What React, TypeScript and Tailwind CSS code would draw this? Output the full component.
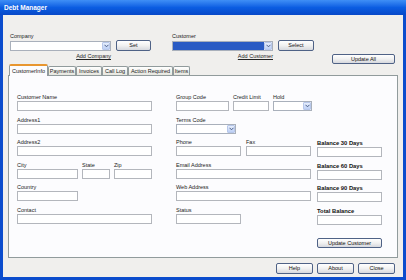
import type { ReactNode } from 'react';

function Label({ children, bold }: { children: ReactNode; bold?: boolean }) {
  return (
    <div
      className={
        bold
          ? 'h-[8px] leading-[8px] text-[5.8px] font-bold text-[#111] whitespace-nowrap'
          : 'h-[8px] leading-[8px] text-[5.5px] text-[#222] whitespace-nowrap'
      }
    >
      {children}
    </div>
  );
}

function Input({ className = 'w-full' }: { className?: string }) {
  return <div className={`h-[10px] border border-[#b3b6bc] bg-white ${className}`} />;
}

function Chevron() {
  return (
    <svg width="5" height="4" viewBox="0 0 5 4">
      <path d="M0.5 0.8 L2.5 2.8 L4.5 0.8" fill="none" stroke="#4b5d86" strokeWidth="1" />
    </svg>
  );
}

function Combo({ className, selected }: { className: string; selected?: boolean }) {
  return (
    <div className={`flex h-[10px] border border-[#a9b0bb] bg-white ${className}`}>
      <div className={selected ? 'flex-1 bg-[#2a5bc4]' : 'flex-1'} />
      <div className="flex w-[8px] items-center justify-center rounded-[1px] border border-[#b7c7ea] bg-linear-to-b from-[#e6eefc] to-[#bccff5]">
        <Chevron />
      </div>
    </div>
  );
}

function Button({ children, className }: { children: ReactNode; className: string }) {
  return (
    <div
      className={`flex items-center justify-center rounded-[2px] border border-[#4f6286] bg-linear-to-b from-white via-[#f1f1f1] to-[#d6d8de] text-[5.5px] text-[#111] ${className}`}
    >
      {children}
    </div>
  );
}

function Field({ label, bold, children }: { label: string; bold?: boolean; children?: ReactNode }) {
  return (
    <div className="flex flex-col">
      <Label bold={bold}>{label}</Label>
      {children ?? <Input />}
    </div>
  );
}

function Tab({ label, width, active }: { label: string; width: string; active?: boolean }) {
  if (active) {
    return (
      <div
        className={`relative z-10 -mb-px flex h-[12px] items-center justify-center rounded-t-[2px] border-x border-t-2 border-[#919b9c] border-t-[#e8962f] bg-[#fcfcfe] text-[5.5px] ${width}`}
      >
        {label}
      </div>
    );
  }
  return (
    <div
      className={`flex h-[9px] items-center justify-center rounded-t-[2px] border border-b-0 border-[#919b9c] bg-linear-to-b from-white to-[#e6e6df] text-[5.5px] ${width}`}
    >
      {label}
    </div>
  );
}

export default function App() {
  return (
    <div className="flex h-[280px] w-[406px] flex-col bg-[#0b4ccd] font-['Liberation_Sans',Arial,sans-serif] text-[#222]">
      {/* title bar */}
      <div className="flex h-[15px] items-center bg-linear-to-b from-[#3f8ff6] via-[#0b5de2] to-[#0848c8] pl-[4px]">
        <span className="text-[6.5px] font-bold text-white">Debt Manager</span>
      </div>

      <div className="mx-[3px] mb-[3px] flex flex-1 flex-col bg-[#f0efed]">
        {/* company / customer */}
        <div className="flex h-[49px] pl-[7px] pr-[8px] pt-[17px]">
          <div className="flex flex-col">
            <Label>Company</Label>
            <div className="flex items-center gap-[5px]">
              <Combo className="w-[101px]" />
              <Button className="h-[11px] w-[35px]">Set</Button>
            </div>
            <div className="mt-[1px] w-[101px] text-right text-[5.5px] leading-[8px] underline">Add Company</div>
          </div>
          <div className="ml-[21px] flex flex-col">
            <Label>Customer</Label>
            <div className="flex items-center gap-[5px]">
              <Combo className="w-[101px]" selected />
              <Button className="h-[11px] w-[36px]">Select</Button>
            </div>
            <div className="mt-[1px] w-[101px] text-right text-[5.5px] leading-[8px] underline">Add Customer</div>
          </div>
          <Button className="ml-auto mt-[22px] h-[10px] w-[63px]">Update All</Button>
        </div>

        {/* tabs */}
        <div className="flex h-[11px] items-end pl-[6px]">
          <Tab label="CustomerInfo" width="w-[39px]" active />
          <Tab label="Payments" width="w-[28px]" />
          <Tab label="Invoices" width="w-[26px]" />
          <Tab label="Call Log" width="w-[26px]" />
          <Tab label="Action Required" width="w-[45px]" />
          <Tab label="Items" width="w-[17px]" />
        </div>

        {/* tab page */}
        <div className="mx-[5px] flex h-[183px] border border-[#919b9c] bg-[#fcfcfe] pl-[8px] pt-[17px]">
          <div className="flex w-[135px] flex-col">
            <div className="h-[22.5px]"><Field label="Customer Name" /></div>
            <div className="h-[22.5px]"><Field label="Address1" /></div>
            <div className="h-[22.5px]"><Field label="Address2" /></div>
            <div className="flex h-[22.5px] gap-[4px]">
              <Field label="City"><Input className="w-[61px]" /></Field>
              <Field label="State"><Input className="w-[28px]" /></Field>
              <Field label="Zip"><Input className="w-[38px]" /></Field>
            </div>
            <div className="h-[22.5px]"><Field label="Country"><Input className="w-[61px]" /></Field></div>
            <div className="h-[22.5px]"><Field label="Contact" /></div>
          </div>

          <div className="ml-[24px] flex w-[136px] flex-col">
            <div className="flex h-[22.5px] gap-[4px]">
              <Field label="Group Code"><Input className="w-[53px]" /></Field>
              <Field label="Credit Limit"><Input className="w-[36px]" /></Field>
              <Field label="Hold"><Combo className="w-[39px]" /></Field>
            </div>
            <div className="h-[22.5px]"><Field label="Terms Code"><Combo className="w-[60px]" /></Field></div>
            <div className="flex h-[22.5px] gap-[5px]">
              <Field label="Phone"><Input className="w-[65px]" /></Field>
              <Field label="Fax"><Input className="w-[65px]" /></Field>
            </div>
            <div className="h-[22.5px] w-[135px]"><Field label="Email Address" /></div>
            <div className="h-[22.5px] w-[135px]"><Field label="Web Address" /></div>
            <div className="h-[22.5px]"><Field label="Status"><Input className="w-[65px]" /></Field></div>
          </div>

          <div className="ml-[5px] flex w-[65px] flex-col pt-[46px]">
            <div className="h-[22.5px]"><Field label="Balance 30 Days" bold /></div>
            <div className="h-[22.5px]"><Field label="Balance 60 Days" bold /></div>
            <div className="h-[22.5px]"><Field label="Balance 90 Days" bold /></div>
            <div className="h-[22.5px]"><Field label="Total Balance" bold /></div>
            <Button className="mt-[9px] h-[10px] w-[65px]">Update Customer</Button>
          </div>
        </div>

        {/* footer */}
        <div className="flex justify-end gap-[4px] pr-[8px] pt-[5px]">
          <Button className="h-[11px] w-[37px]">Help</Button>
          <Button className="h-[11px] w-[37px]">About</Button>
          <Button className="h-[11px] w-[37px]">Close</Button>
        </div>
      </div>
    </div>
  );
}
